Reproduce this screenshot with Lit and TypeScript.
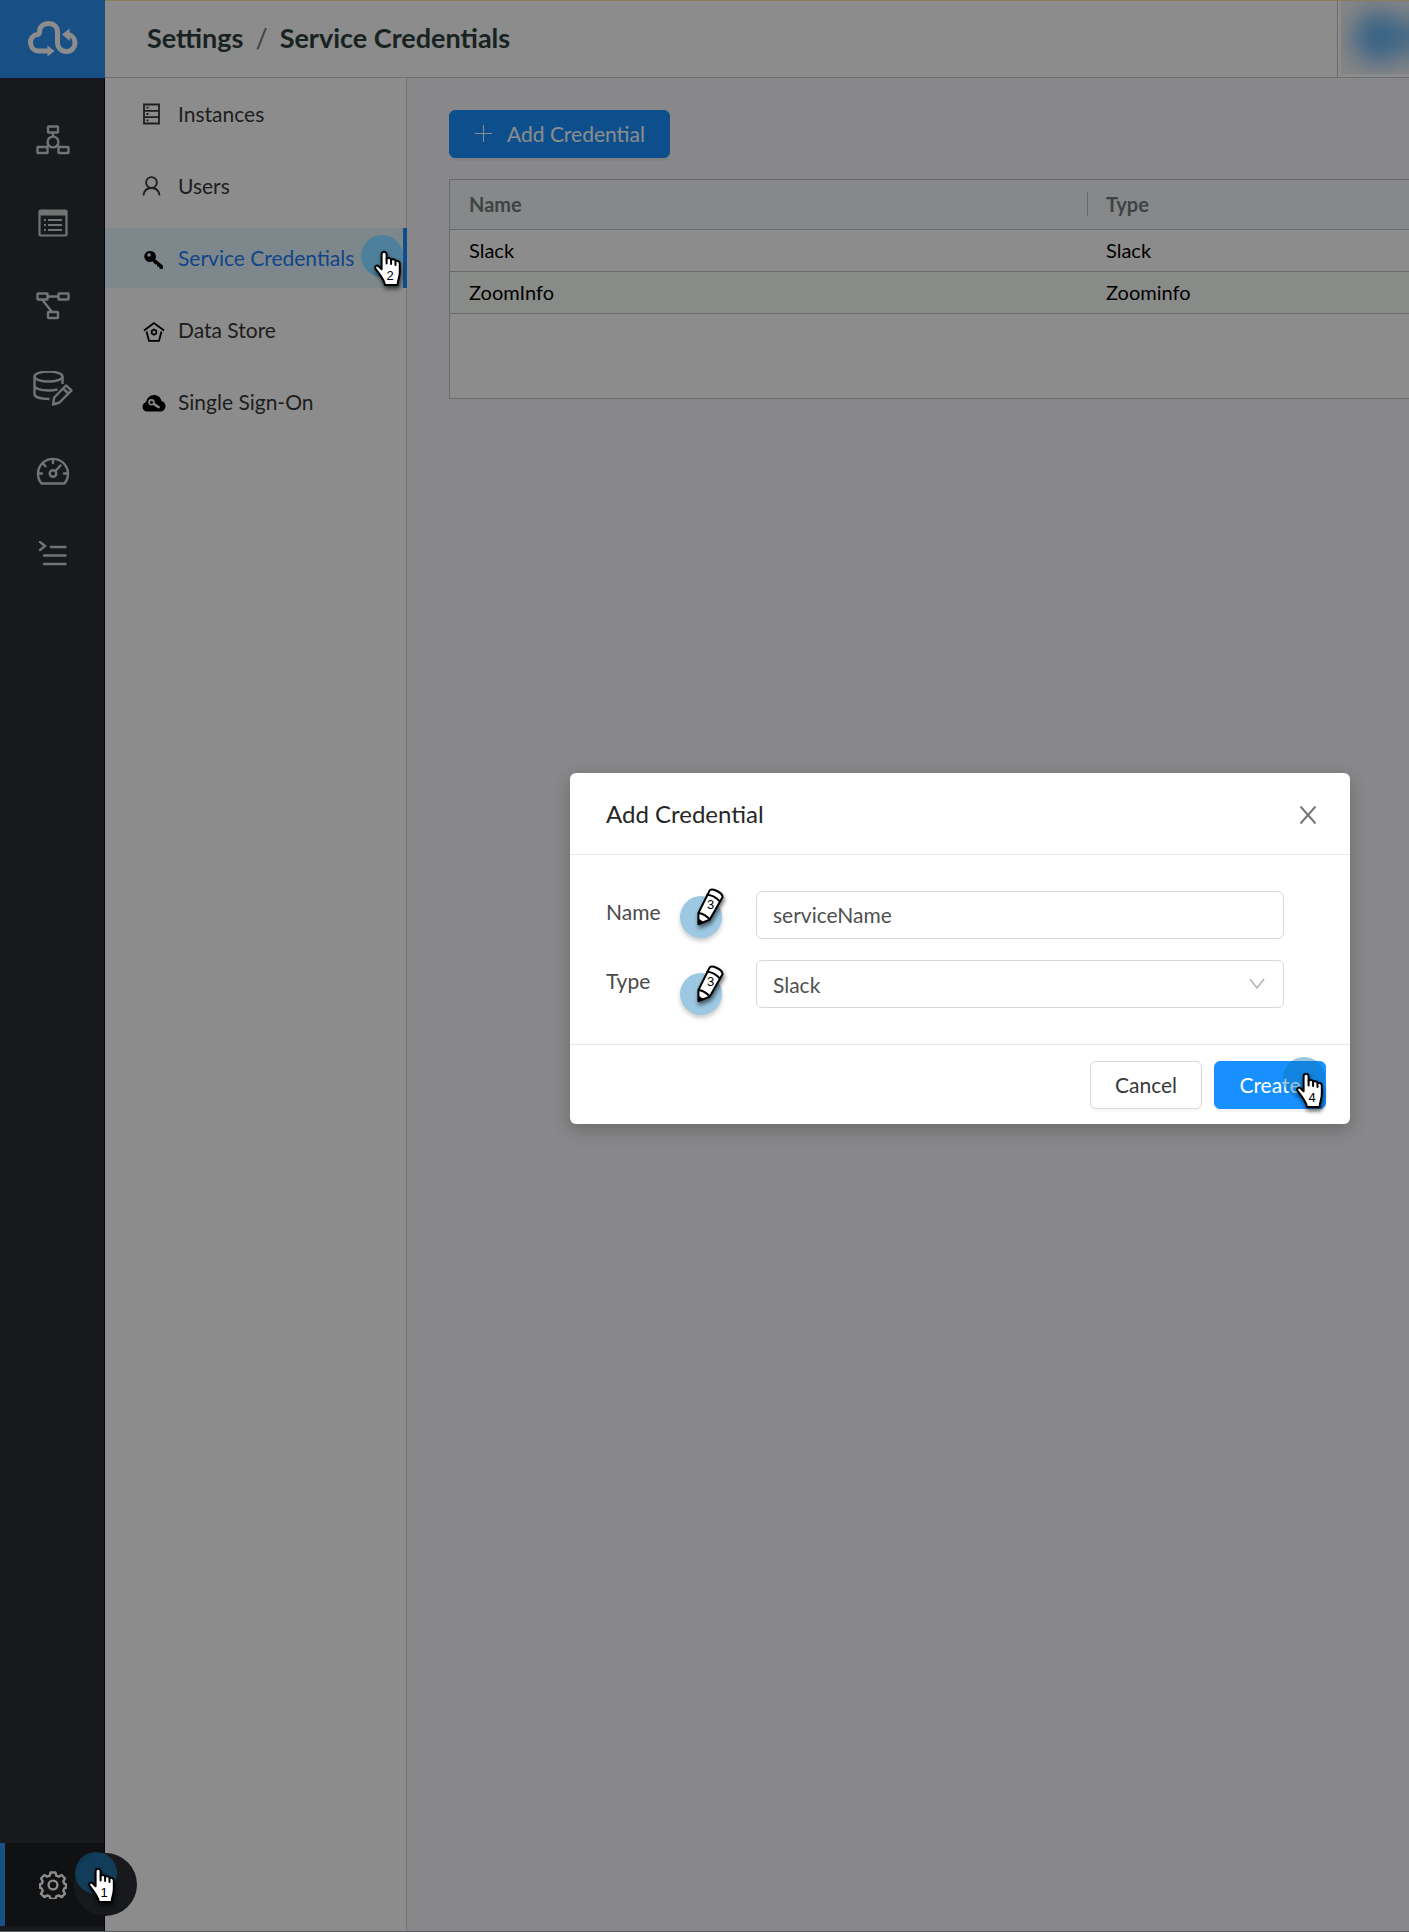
import { LitElement, html, svg, css, nothing } from "lit";
import { customElement, property, state } from "lit/decorators.js";
import { classMap } from "lit/directives/class-map.js";

/** Numbered walkthrough marker: a tinted disc with a hand or a pencil on it. */
@customElement("step-marker")
class StepMarker extends LitElement {
  @property() kind: "hand" | "pencil" = "hand";
  @property() step = "1";

  static styles = css`
    :host {
      display: block;
      width: 56px;
      height: 60px;
      pointer-events: none;
    }
    .art {
      display: block;
      overflow: visible;
    }
    .disc {
      fill: rgb(10, 113, 178);
      fill-opacity: 0.41;
    }
    .shape {
      fill: #fff;
      stroke: #000;
      stroke-width: 2;
      stroke-linejoin: round;
      stroke-linecap: round;
      filter: drop-shadow(1px 3px 2px rgba(0, 0, 0, 0.6));
    }
    .detail {
      fill: none;
      stroke: #000;
      stroke-width: 2;
      stroke-linecap: round;
    }
    .lead {
      fill: #000;
    }
    .halo {
      fill: #9cc8e3;
      fill-opacity: 1;
      filter: drop-shadow(0 3px 2px rgba(0, 0, 0, 0.2));
    }
    .digit {
      font: 13px "Liberation Sans", Arial, sans-serif;
      fill: #000;
      text-anchor: middle;
    }
  `;

  private hand() {
    return svg`
      <circle class="disc" cx="22" cy="22" r="21"></circle>
      <g transform="translate(14 17)">
        <path class="shape" d="M7.6 3.2a2.5 2.5 0 0 1 5 0v4.6c1.4-1.4 4-.9 4.5.9 1.5-1 3.9-.4 4.4 1.3 2-.8 4.3.4 4.3 2.8v8.2c0 5-1.8 7-2.2 13H11c-.6-4-2.8-6.5-4.4-9.3L1.6 17.8c-1.4-2.6 1.1-4.2 3-2.6l3 3z"></path>
        <path class="detail" d="M12.6 7.8v4.6M17.1 8.9v4.2M21.5 10.5v3.6"></path>
        <text class="digit" x="16" y="29">${this.step}</text>
      </g>`;
  }

  private pencil() {
    return svg`
      <circle class="disc halo" cx="22" cy="30" r="21"></circle>
      <g transform="translate(17 0)">
        <path class="shape" d="M2.4 37.2V26L13.6 3.6C15 .8 26 4.6 26.6 10L13.8 32.6z"></path>
        <path class="detail" d="M11.4 7.8Q18 8.4 23.8 14.4M2.8 26Q9 27.2 13.4 32"></path>
        <path class="lead" d="M2.4 31.4l4.8 3.4-4.8 3z"></path>
        <text class="digit" x="14.5" y="22">${this.step}</text>
      </g>`;
  }

  render() {
    return html`<svg class="art" width="56" height="60" viewBox="0 0 56 60" aria-hidden="true">
      ${this.kind === "hand" ? this.hand() : this.pencil()}
    </svg>`;
  }
}

const ICONS: Record<string, unknown> = {
  logo: svg`<svg width="50" height="36" viewBox="28 21 50 36" fill="none" stroke="#fff" stroke-width="5">
    <path d="M49 51H39C33 51 30.5 46.5 30.5 42.5C30.5 38 33.5 35 37.5 34.5C38.5 34.3 39.5 33.5 39.5 32C39.5 26.5 43.5 23.5 48.5 23.5C54 23.5 57.5 27 57.5 32V42C57.5 48 61.5 51.5 66.5 51.5C71.5 51.5 75 47.5 75 43C75 38.5 72 35 68 34.5"></path>
    <path d="M47.5 45.5L54.5 51l-7 5.5zM69.5 28.5L62 34.5l8 6.5z" fill="#fff" stroke="none"></path></svg>`,
  org: svg`<svg width="34" height="30" viewBox="0 0 34 30" fill="none" stroke="currentColor" stroke-width="2.4">
    <rect x="12" y="1.5" width="10" height="6" rx=".5"></rect><rect x="1.5" y="22" width="10" height="6" rx=".5"></rect><rect x="22.5" y="22" width="10" height="6" rx=".5"></rect>
    <circle cx="17" cy="17" r="5.4"></circle><path d="M17 8v4M13 20.5l-3 2M21 20.5l3 2"></path></svg>`,
  list: svg`<svg width="30" height="28" viewBox="0 0 30 28" fill="none" stroke="currentColor" stroke-width="2.2">
    <rect x="1.5" y="1.5" width="27" height="25" rx="1"></rect><path d="M1 4h28" stroke-width="5"></path>
    <path d="M10 11h14M10 16h14M10 21h14M6 11h2M6 16h2M6 21h2"></path></svg>`,
  flow: svg`<svg width="34" height="28" viewBox="0 0 34 28" fill="none" stroke="currentColor" stroke-width="2.4">
    <rect x="1.5" y="1.5" width="10" height="6" rx=".5"></rect><rect x="22.5" y="1.5" width="10" height="6" rx=".5"></rect><rect x="12" y="20" width="10" height="6" rx=".5"></rect>
    <path d="M12 4.5h10M6.5 8l9.5 12"></path></svg>`,
  database: svg`<svg width="40" height="36" viewBox="0 1 40 36" fill="none" stroke="currentColor" stroke-width="2.4">
    <ellipse cx="15.5" cy="6.5" rx="14" ry="5"></ellipse><path d="M1.5 6.5V24c0 3 6 5 15 5M29.5 6.5V14M1.5 15.5c0 3 6 5 14 5 3.5 0 6.5-.4 9-1.2"></path>
    <path d="M20 34.5l1.2-7L33 15.5l5.5 4.8L26.5 32.5zM30 18.5l5.5 5" stroke-linejoin="round"></path></svg>`,
  gauge: svg`<svg width="34" height="30" viewBox="0 1 34 30" fill="none" stroke="currentColor" stroke-width="2.4" stroke-linejoin="round" stroke-linecap="round">
    <path d="M5.5 27.5A15 15 0 1 1 28.5 27.5zM17 3v4M2 17.5h4M28 17.5h4M7 7.5l2.5 2.8M19.5 15l5-5.5"></path><circle cx="17" cy="17.5" r="3.3"></circle></svg>`,
  console: svg`<svg width="30" height="28" viewBox="0 2 30 28" fill="none" stroke="currentColor" stroke-width="2.4" stroke-linecap="round">
    <path d="M2 3l5 4-5 4M13 8h14.500M6 16.500h21.500M6 25h21.500"></path></svg>`,
  gear: svg`<svg width="28" height="28" viewBox="0 0 28 28" fill="none" stroke="currentColor" stroke-width="2.4" stroke-linejoin="round">
    <path d="M11.5 1.5h5l.8 3.2 2.4 1 2.9-1.7 3.4 3.5-1.7 2.8 1 2.400 1.700.5v3.600l-1.700.6-1 2.400 1.700 2.800-3.400 3.500-2.900-1.700-2.400 1-.8 2.600h-5l-.8-2.600-2.400-1-2.900 1.700L2 22.600l1.700-2.800-1-2.400-1.700-.6v-3.600l1.700-.5 1-2.400L2 7.500 5.400 4l2.900 1.700 2.400-1z"></path><circle cx="14" cy="14" r="4.400"></circle></svg>`,
  server: svg`<svg width="20" height="22" viewBox="0 0 20 22" fill="none" stroke="currentColor" stroke-width="1.800">
    <path d="M2 1.500h15v19H2zM2 7.800h15M2 14.200h15"></path><path d="M4.500 4.700h2M4.500 11h2M4.500 17.300h2"></path></svg>`,
  user: svg`<svg width="20" height="22" viewBox="0 0 20 22" fill="none" stroke="currentColor" stroke-width="1.800">
    <circle cx="9.500" cy="7.500" r="5.400"></circle><path d="M1.500 20.500C2 16 5 13 9.500 13s7.500 3 8 7.500"></path></svg>`,
  key: svg`<svg width="22" height="22" viewBox="-2 -2 22 22" overflow="visible" fill="#000">
    <path fill-rule="evenodd" d="M7.500 2a5.500 5.500 0 0 1 4.700 8.200l7.600 6.300.2 3.500-3.500-.2-.3-2-2-.2-.2-2-2-.4-2.600-2.900A5.500 5.500 0 1 1 7.500 2zM6 4.200a1.800 1.800 0 1 0 .01 3.600A1.800 1.800 0 0 0 6 4.200z"></path></svg>`,
  store: svg`<svg width="22" height="22" viewBox="-2 -2 22 22" overflow="visible" fill="none" stroke="#000" stroke-width="1.800">
    <path d="M1 9.500L11 2l10 7.500M3.500 10.500L6 19.800h10l2.500-9.300"></path><path d="M11 8.500l2.200 1.300v2.600L11 13.700l-2.200-1.300V9.800z"></path></svg>`,
  cloud: svg`<svg width="24" height="18" viewBox="-2 -1 24 18" overflow="visible">
    <path d="M5.500 17.500C2.500 17.500.6 15.400.6 12.700c0-2.300 1.300-4 3.600-4.700C4.800 4 8 1 12 1c3.800 0 6.600 2.300 7.500 6 2.500.5 4 2.700 4 5 0 3-2 5.500-5 5.500z" fill="#000"></path>
    <circle cx="9.500" cy="8.300" r="2.400" fill="none" stroke="#fff" stroke-width="1.600"></circle><path d="M11.500 9.800l6 4" stroke="#fff" stroke-width="2.400"></path></svg>`,
  plus: svg`<svg width="18" height="18" viewBox="0 0 18 18" stroke="currentColor"><path d="M0 8.500h17M8.500 0v17"></path></svg>`,
  close: svg`<svg width="18" height="18" viewBox="0 0 18 18" stroke="currentColor" stroke-width="2"><path d="M1.500 .5l15 17M16.500 .5l-15 17"></path></svg>`,
  chevron: svg`<svg width="16" height="12" viewBox="0 0 16 12" fill="none" stroke="currentColor" stroke-width="1.600"><path d="M1 1l7 9 7-9"></path></svg>`,
};

interface MenuEntry {
  label: string;
  icon: string;
}

const RAIL: MenuEntry[] = [
  { label: "Organization", icon: "org" },
  { label: "Forms", icon: "list" },
  { label: "Flows", icon: "flow" },
  { label: "Data", icon: "database" },
  { label: "Dashboard", icon: "gauge" },
  { label: "Logs", icon: "console" },
];

const MENU: MenuEntry[] = [
  { label: "Instances", icon: "server" },
  { label: "Users", icon: "user" },
  { label: "Service Credentials", icon: "key" },
  { label: "Data Store", icon: "store" },
  { label: "Single Sign-On", icon: "cloud" },
];

const CREDENTIALS = [
  { name: "Slack", type: "Slack" },
  { name: "ZoomInfo", type: "Zoominfo" },
];

@customElement("app-root")
class AppRoot extends LitElement {
  @state() private active = "Service Credentials";

  static styles = css`
    :host {
      box-sizing: border-box;
      display: flex;
      position: relative;
      min-height: 100vh;
      overflow: hidden;
      border-bottom: 1px solid #5c5d5e;
      font-family: Lato, "Open Sans", sans-serif;
      font-size: 21px;
      line-height: 32px;
      color: #383838;
      background: #f7f8fb;
    }
    *,
    *::before {
      box-sizing: border-box;
    }
    svg {
      display: block;
      flex: none;
    }
    button,
    input,
    select {
      font: inherit;
      color: inherit;
      margin: 0;
    }
    a {
      color: inherit;
      text-decoration: none;
    }

    .rail {
      display: flex;
      flex-direction: column;
      flex: none;
      width: 105px;
      padding-bottom: 5px;
      background: #2c2e35;
      border-right: 1px solid #0c0c20;
      color: #d0d2d2;
    }
    .logo {
      display: grid;
      place-items: center;
      height: 78px;
      margin: 0 -1px 20px 0;
      background: #2c93f5;
    }
    .rail-link {
      position: relative;
      display: grid;
      place-items: center;
      height: 83px;
      padding-left: 2px;
    }
    .rail-link.bottom {
      margin-top: auto;
      background: #1d1f22;
      border-left: 5px solid #2c93f5;
      padding: 0 4px 0 0;
      color: #fff;
    }
    .bubble {
      position: absolute;
      top: 10px;
      left: 69px;
      width: 63px;
      height: 63px;
      border-radius: 50%;
      background: #2c2e35;
    }
    .mark {
      position: absolute;
      z-index: 3;
    }
    .mark.one {
      top: 8px;
      left: 69px;
    }
    .mark.two {
      top: 6px;
      right: -13px;
    }
    .mark.three {
      top: -4px;
      left: 73px;
    }
    .mark.three.low {
      top: 4px;
    }
    .mark.four {
      top: -6px;
      right: -13px;
    }

    .page {
      display: flex;
      flex-direction: column;
      flex: 1;
      min-width: 0;
    }
    .topbar {
      display: flex;
      align-items: stretch;
      height: 78px;
      background: #fff;
      border-top: 1px solid #ffe2a6;
      border-bottom: 1px solid #c8cacc;
    }
    .crumbs {
      display: flex;
      align-items: center;
      gap: 12px;
      flex: 1;
      padding: 0 0 2px 42px;
      font-size: 27px;
      font-weight: 700;
      color: #2d3e3c;
    }
    .slash {
      font-weight: 400;
      color: #777;
    }
    .account {
      width: 72px;
      border-left: 1px solid #c0c2c4;
      padding: 0 0 3px 3px;
    }
    .blurred {
      height: 100%;
      overflow: hidden;
      background: #f2f3f4;
    }
    .avatar {
      width: 52px;
      height: 52px;
      margin: 10px 0 0 12px;
      border-radius: 50%;
      background: #66b4f5;
      box-shadow: 46px 0 0 -4px #7fc0f4;
      filter: blur(12px);
    }

    .columns {
      display: flex;
      flex: 1;
    }
    .menu {
      display: flex;
      flex-direction: column;
      gap: 12px;
      flex: none;
      width: 302px;
      padding-top: 6px;
      background: #fff;
      border-right: 1px solid #d4d6d8;
    }
    .menu-link {
      position: relative;
      display: flex;
      align-items: center;
      gap: 14px;
      height: 60px;
      padding-left: 35px;
    }
    .menu-icon {
      display: grid;
      place-items: center;
      width: 24px;
    }
    .menu-link.active {
      margin-right: -1px;
      background: #e6f7ff;
      border-right: 4px solid #1890ff;
      color: #1b7ffa;
    }

    .content {
      flex: 1;
      min-width: 0;
      padding: 32px 0 0 42px;
    }
    .btn {
      display: inline-flex;
      align-items: center;
      justify-content: center;
      min-width: 112px;
      height: 48px;
      padding: 0 23px;
      border: 1px solid #d9d9d9;
      border-radius: 6px;
      background: #fff;
      box-shadow: 0 3px 0 rgba(0, 0, 0, 0.02);
      cursor: pointer;
    }
    .btn.primary {
      position: relative;
      border-color: #1890ff;
      background: #1890ff;
      color: #fff;
      box-shadow: 0 3px 0 rgba(0, 0, 0, 0.045);
    }
    .btn.add {
      gap: 14px;
      padding: 0 24px 0 25px;
    }
    .grid {
      min-height: 220px;
      margin-top: 21px;
      border: 1px solid #bdc3c7;
      border-right: 0;
      background: #fff;
    }
    .table {
      width: 100%;
      border-collapse: collapse;
      table-layout: fixed;
      text-align: left;
      font-size: 20px;
      line-height: 24px;
      color: #000;
    }
    .name-col {
      width: 637px;
    }
    .head th {
      position: relative;
      height: 49px;
      padding: 0 19px 1px;
      font-weight: 700;
      color: #6f7b7b;
      background: #f6f8fa;
    }
    .head th + th::before {
      content: "";
      position: absolute;
      left: 0;
      top: 12px;
      height: 24px;
      border-left: 1px solid #bdc3c7;
    }
    .table tr {
      border-bottom: 1px solid #bdc3c7;
    }
    .table td {
      height: 42px;
      padding: 0 19px;
    }
    .table tbody tr:nth-child(even) {
      background: #fafdfa;
    }

    .overlay {
      position: absolute;
      inset: 0;
      z-index: 2;
      display: flex;
      align-items: center;
      justify-content: flex-end;
      padding: 0 59px 34px 0;
      background: rgba(0, 0, 0, 0.45);
    }
    .dialog {
      width: 780px;
      background: #fff;
      border-radius: 6px;
      box-shadow: 0 6px 18px rgba(0, 0, 0, 0.22);
    }
    .dialog-head {
      display: flex;
      align-items: center;
      justify-content: space-between;
      height: 82px;
      padding: 2px 33px 0 36px;
      border-bottom: 1px solid #e8e8e8;
    }
    .title {
      margin: 0;
      padding-bottom: 2px;
      font-size: 24px;
      font-weight: 400;
      color: #262626;
    }
    .close {
      display: grid;
      place-items: center;
      padding: 0;
      border: 0;
      background: none;
      color: #737373;
    }
    .form {
      display: flex;
      flex-direction: column;
      gap: 21px;
      padding: 36px 66px 36px 36px;
    }
    .field {
      position: relative;
      display: flex;
      align-items: center;
    }
    .label {
      width: 150px;
      padding-bottom: 6px;
      color: #4a4a4a;
    }
    .control {
      position: relative;
      display: flex;
      flex: 1;
      align-items: center;
    }
    .input {
      width: 100%;
      height: 48px;
      padding: 0 16px 2px;
      border: 1px solid #d9d9d9;
      border-radius: 6px;
      background: #fff;
      color: #505050;
      appearance: none;
      outline: 0;
    }
    select.input {
      padding: 2px 16px 0;
    }
    .chevron {
      position: absolute;
      right: 19px;
      color: #b4b4b4;
      pointer-events: none;
    }
    .dialog-foot {
      display: flex;
      justify-content: flex-end;
      gap: 12px;
      padding: 16px 24px 15px;
      border-top: 1px solid #e8e8e8;
    }
  `;

  private renderRail() {
    return html`<nav class="rail" aria-label="Main">
      <a class="logo" href="#home" aria-label="Home">${ICONS.logo}</a>
      ${RAIL.map(
        (r) => html`<a class="rail-link" href="#${r.icon}" aria-label=${r.label}>${ICONS[r.icon]}</a>`
      )}
      <a class="rail-link bottom" href="#settings" aria-label="Settings">
        ${ICONS.gear}
        <span class="bubble"></span>
        <step-marker class="mark one" kind="hand" step="1"></step-marker>
      </a>
    </nav>`;
  }

  private renderMenu() {
    return html`<nav class="menu" aria-label="Settings">
      ${MENU.map((m) => {
        const active = m.label === this.active;
        return html`<a
          class=${classMap({ "menu-link": true, active })}
          href="#${m.icon}"
          @click=${() => (this.active = m.label)}
        >
          <span class="menu-icon">${ICONS[m.icon]}</span>
          <span>${m.label}</span>
          ${active ? html`<step-marker class="mark two" kind="hand" step="2"></step-marker>` : nothing}
        </a>`;
      })}
    </nav>`;
  }

  private renderTable() {
    return html`<div class="grid">
      <table class="table">
        <colgroup>
          <col class="name-col" />
          <col />
        </colgroup>
        <thead class="head">
          <tr>
            <th scope="col">Name</th>
            <th scope="col">Type</th>
          </tr>
        </thead>
        <tbody>
          ${CREDENTIALS.map((c) => html`<tr><td>${c.name}</td><td>${c.type}</td></tr>`)}
        </tbody>
      </table>
    </div>`;
  }

  private renderDialog() {
    return html`<div class="overlay">
      <section class="dialog" role="dialog" aria-labelledby="dialog-title">
        <header class="dialog-head">
          <h2 class="title" id="dialog-title">Add Credential</h2>
          <button class="close" type="button" aria-label="Close">${ICONS.close}</button>
        </header>
        <div class="form">
          <div class="field">
            <label class="label" for="name">Name</label>
            <div class="control">
              <input class="input" id="name" type="text" value="serviceName" />
            </div>
            <step-marker class="mark three" kind="pencil" step="3"></step-marker>
          </div>
          <div class="field">
            <label class="label" for="type">Type</label>
            <div class="control">
              <select class="input" id="type">
                <option>Slack</option>
                <option>Zoominfo</option>
              </select>
              <span class="chevron">${ICONS.chevron}</span>
            </div>
            <step-marker class="mark three low" kind="pencil" step="3"></step-marker>
          </div>
        </div>
        <footer class="dialog-foot">
          <button class="btn" type="button">Cancel</button>
          <button class="btn primary" type="button">
            Create
            <step-marker class="mark four" kind="hand" step="4"></step-marker>
          </button>
        </footer>
      </section>
    </div>`;
  }

  render() {
    return html`
      ${this.renderRail()}
      <div class="page">
        <header class="topbar">
          <div class="crumbs">
            <span>Settings</span><span class="slash">/</span><span>Service Credentials</span>
          </div>
          <div class="account"><div class="blurred"><div class="avatar"></div></div></div>
        </header>
        <div class="columns">
          ${this.renderMenu()}
          <main class="content">
            <button class="btn primary add" type="button">${ICONS.plus}<span>Add Credential</span></button>
            ${this.renderTable()}
          </main>
        </div>
      </div>
      ${this.renderDialog()}
    `;
  }
}
